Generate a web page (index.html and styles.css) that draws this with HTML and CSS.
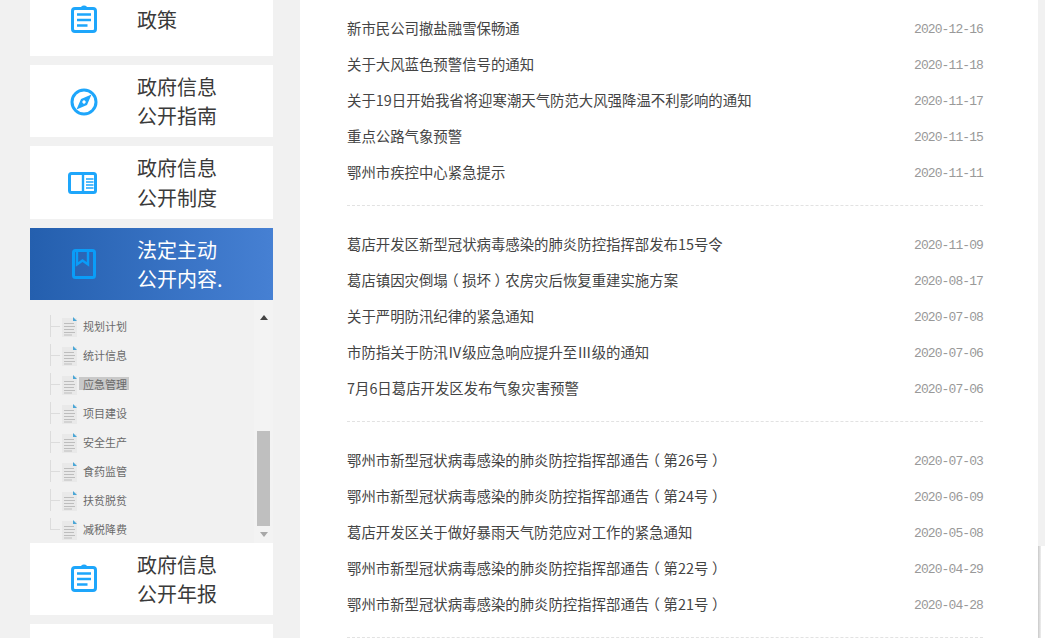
FILE: index.html
```html
<!DOCTYPE html>
<html lang="zh-CN">
<head>
<meta charset="utf-8">
<title>政府信息公开</title>
<link rel="stylesheet" href="styles.css">
</head>
<body>
<svg class="defs" width="0" height="0" aria-hidden="true">
  <symbol id="i-clip" viewBox="0 0 28 28">
    <rect x="2.500" y="3.500" width="23" height="23" rx="2.500" fill="none" stroke="currentColor" stroke-width="3"/>
    <path d="M10.500 4 Q10.500 .5 14 .5 Q17.500 .5 17.500 4Z" fill="currentColor"/>
    <path d="M7 9.500h14M7 15h14M7 20.500h10.500" stroke="currentColor" stroke-width="2.400" fill="none"/>
  </symbol>
  <symbol id="i-doc" viewBox="0 0 15 20">
    <rect x="0" y="1" width="15" height="19" fill="#e9e9e9"/>
    <path d="M2 6.500h10M2 9.500h11M2 12.500h10M2 15.500h11M2 18h8" stroke="#bdbdbd" stroke-width="1" fill="none"/>
    <path d="M11 0l4 4h-4z" fill="#4aa6d6"/>
  </symbol>
</svg>
<div class="page">
  <aside class="side">
    <a class="card">
      <svg class="ic ic-clip"><use href="#i-clip"/></svg>
      <span class="label">政策</span>
    </a>
    <a class="card">
      <svg class="ic ic-comp" viewBox="0 0 28 28">
        <circle cx="14" cy="14" r="12" fill="none" stroke="currentColor" stroke-width="3"/>
        <path fill-rule="evenodd" fill="currentColor" d="M21.500 6.500l-4.500 10.500L6.500 21.500l4.500-10.500zM14 12.300a1.700 1.700 0 1 0 .01 0z"/>
      </svg>
      <span class="label">政府信息<br>公开指南</span>
    </a>
    <a class="card">
      <svg class="ic ic-wide" viewBox="0 0 29 22">
        <rect x="1.500" y="1.500" width="26" height="19" rx="2" fill="none" stroke="currentColor" stroke-width="3"/>
        <path d="M15 1v20" stroke="currentColor" stroke-width="2.400" fill="none"/>
        <path d="M18 7h7.500M18 10h7.500M18 13h7.500M18 16h7.500" stroke="currentColor" stroke-width="1.600" fill="none"/>
      </svg>
      <span class="label">政府信息<br>公开制度</span>
    </a>
    <a class="card card-on">
      <svg class="ic ic-tall" viewBox="0 0 24 30">
        <rect x="1.500" y="1.500" width="21" height="27" rx="2" fill="none" stroke="currentColor" stroke-width="3"/>
        <path d="M5 1v14.500l5.500-4 5.500 4V1" stroke="currentColor" stroke-width="2.400" fill="none"/>
      </svg>
      <span class="label">法定主动<br>公开内容.</span>
    </a>
    <div class="tree">
      <ul class="tree-list">
        <li class="node"><svg class="doc"><use href="#i-doc"/></svg><span class="leaf">规划计划</span></li>
        <li class="node"><svg class="doc"><use href="#i-doc"/></svg><span class="leaf">统计信息</span></li>
        <li class="node"><svg class="doc"><use href="#i-doc"/></svg><span class="leaf leaf-on">应急管理</span></li>
        <li class="node"><svg class="doc"><use href="#i-doc"/></svg><span class="leaf">项目建设</span></li>
        <li class="node"><svg class="doc"><use href="#i-doc"/></svg><span class="leaf">安全生产</span></li>
        <li class="node"><svg class="doc"><use href="#i-doc"/></svg><span class="leaf">食药监管</span></li>
        <li class="node"><svg class="doc"><use href="#i-doc"/></svg><span class="leaf">扶贫脱贫</span></li>
        <li class="node node-last"><svg class="doc"><use href="#i-doc"/></svg><span class="leaf">减税降费</span></li>
      </ul>
      <div class="sbar">
        <span class="arrow-up"></span>
        <span class="thumb"></span>
        <span class="arrow-down"></span>
      </div>
    </div>
    <a class="card">
      <svg class="ic ic-clip"><use href="#i-clip"/></svg>
      <span class="label">政府信息<br>公开年报</span>
    </a>
    <a class="card">
      <svg class="ic ic-clip"><use href="#i-clip"/></svg>
      <span class="label label-low">依申请公开<br>目录</span>
    </a>
  </aside>
  <main class="main">
    <ul class="group">
      <li class="row"><span class="t">新市民公司撤盐融雪保畅通</span><span class="d">2020-12-16</span></li>
      <li class="row"><span class="t">关于大风蓝色预警信号的通知</span><span class="d">2020-11-18</span></li>
      <li class="row"><span class="t">关于19日开始我省将迎寒潮天气防范大风强降温不利影响的通知</span><span class="d">2020-11-17</span></li>
      <li class="row"><span class="t">重点公路气象预警</span><span class="d">2020-11-15</span></li>
      <li class="row"><span class="t">鄂州市疾控中心紧急提示</span><span class="d">2020-11-11</span></li>
    </ul>
    <ul class="group">
      <li class="row"><span class="t">葛店开发区新型冠状病毒感染的肺炎防控指挥部发布15号令</span><span class="d">2020-11-09</span></li>
      <li class="row"><span class="t">葛店镇因灾倒塌<span class="par">（</span>损坏<span class="par">）</span>农房灾后恢复重建实施方案</span><span class="d">2020-08-17</span></li>
      <li class="row"><span class="t">关于严明防汛纪律的紧急通知</span><span class="d">2020-07-08</span></li>
      <li class="row"><span class="t">市防指关于防汛Ⅳ级应急响应提升至Ⅲ级的通知</span><span class="d">2020-07-06</span></li>
      <li class="row"><span class="t">7月6日葛店开发区发布气象灾害预警</span><span class="d">2020-07-06</span></li>
    </ul>
    <ul class="group">
      <li class="row"><span class="t">鄂州市新型冠状病毒感染的肺炎防控指挥部通告<span class="par">（</span>第26号<span class="par">）</span></span><span class="d">2020-07-03</span></li>
      <li class="row"><span class="t">鄂州市新型冠状病毒感染的肺炎防控指挥部通告<span class="par">（</span>第24号<span class="par">）</span></span><span class="d">2020-06-09</span></li>
      <li class="row"><span class="t">葛店开发区关于做好暴雨天气防范应对工作的紧急通知</span><span class="d">2020-05-08</span></li>
      <li class="row"><span class="t">鄂州市新型冠状病毒感染的肺炎防控指挥部通告<span class="par">（</span>第22号<span class="par">）</span></span><span class="d">2020-04-29</span></li>
      <li class="row"><span class="t">鄂州市新型冠状病毒感染的肺炎防控指挥部通告<span class="par">（</span>第21号<span class="par">）</span></span><span class="d">2020-04-28</span></li>
    </ul>
  </main>
  <div class="rail"><div class="rail-edge"></div></div>
</div>
</body>
</html>
```
FILE: styles.css
```css
* { box-sizing: border-box; }
html, body { margin: 0; height: 100%; overflow: hidden; }
body {
  background: #f1f1f1;
  color: #333;
  font-family: "Noto Sans CJK SC", "Liberation Sans", sans-serif;
}
ul { list-style: none; margin: 0; padding: 0; }
.defs { display: block; height: 0; }
.page { display: flex; height: 638px; overflow: hidden; }

/* sidebar */
.side {
  width: 243px;
  margin-left: 30px;
  margin-top: -16.75px;
  flex: none;
}
.card {
  display: flex;
  align-items: center;
  height: 72.5px;
  margin-bottom: 9px;
  padding-left: 40px;
  background: #fff;
  color: #1ea6fb;
}
.card-on {
  margin-bottom: 0;
  background: linear-gradient(90deg, #245fae, #4680d3);
  color: #0a9df8;
}
.ic { width: 28px; height: 28px; flex: none; }
.ic-clip { margin-bottom: 2px; }
.ic-comp { margin-top: 2px; }
.ic-wide { width: 29px; height: 22px; margin-left: -2px; margin-right: 1px; margin-top: 1px; }
.ic-tall { height: 30px; }
.label {
  margin-left: 39px;
  font-size: 20px;
  line-height: 29.5px;
  color: #3a3a3a;
  white-space: nowrap;
}
.label-low { margin-top: 5px; }
.card-on .label { color: #fff; }

/* tree */
.tree {
  display: flex;
  height: 242.5px;
}
.tree-list {
  width: 224px;
  flex: none;
  padding: 12px 0 0 20px;
}
.node {
  position: relative;
  display: flex;
  align-items: center;
  height: 29px;
  padding-left: 12px;
}
.node::before {
  content: "";
  position: absolute;
  left: 0;
  top: 3px;
  height: 22px;
  width: 9px;
  border-left: 1px solid #dcdcdc;
  background: linear-gradient(#dcdcdc, #dcdcdc) left 10.5px / 9px 1px no-repeat;
}
.node-last::before { height: 12px; }
.doc { width: 15px; height: 20px; flex: none; }
.leaf {
  margin-left: 2px;
  margin-bottom: 2px;
  padding: 1px 2px 0 4px;
  font-size: 11px;
  line-height: 12px;
  color: #6a6a6a;
  white-space: nowrap;
}
.leaf-on { background: #c9c9c9; }
.sbar {
  width: 19px;
  flex: none;
  display: flex;
  flex-direction: column;
  align-items: center;
  background: #f3f3f3;
}
.arrow-up {
  margin-top: 15px;
  border: 4px solid transparent;
  border-top: 0;
  border-bottom: 5px solid #444;
}
.thumb {
  width: 13px;
  height: 95px;
  margin-top: 111px;
  background: #bfbfbf;
}
.arrow-down {
  margin-top: 6px;
  border: 4px solid transparent;
  border-bottom: 0;
  border-top: 5px solid #a8a8a8;
}

/* main */
.main {
  width: 738px;
  flex: none;
  margin-left: 27px;
  padding: 11px 55px 0 47px;
  background: #fff;
}
.group {
  padding-bottom: 14px;
  margin-bottom: 21px;
  border-bottom: 1px dashed #e2e2e2;
}
.row {
  display: flex;
  justify-content: space-between;
  align-items: center;
  height: 36px;
}
.t {
  padding-bottom: 4px;
  font-size: 14.4px;
  color: #444;
  white-space: nowrap;
}
.par {
  padding: 0 3.6px;
  font-feature-settings: "halt";
}
.d {
  font-family: "Liberation Mono", monospace;
  font-size: 13px;
  letter-spacing: -0.9px;
  color: #999;
}

/* right edge */
.rail {
  flex: 1;
  display: flex;
  flex-direction: column;
  justify-content: flex-end;
}
.rail-edge {
  height: 92px;
  background: linear-gradient(90deg, #c9c9c9, #efefef 3px, #fff 3px);
}
```
